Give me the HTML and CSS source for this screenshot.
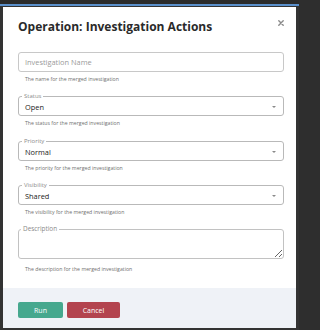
FILE: index.html
```html
<!DOCTYPE html>
<html>
<head>
<meta charset="utf-8">
<link rel="stylesheet" href="styles.css">
</head>
<body>
<div class="topbar"></div>
<div class="accent"></div>
<div class="frame">
  <div class="modal">
    <div class="header">
      <h1 class="title">Operation: Investigation Actions</h1>
      <button class="close" aria-label="Close">
        <svg width="6" height="6" viewBox="0 0 6 6"><path d="M0.8 0.8L5.2 5.2M5.2 0.8L0.8 5.2" stroke="#8a8a8a" stroke-width="1.4" stroke-linecap="round"/></svg>
      </button>
    </div>
    <div class="body">
      <div class="group first">
        <input class="input" type="text" placeholder="Investigation Name">
        <div class="help">The name for the merged investigation</div>
      </div>
      <div class="group">
        <div class="box select">
          <span class="label">Status</span>
          <span class="value">Open</span>
          <span class="caret"></span>
        </div>
        <div class="help">The status for the merged investigation</div>
      </div>
      <div class="group wide">
        <div class="box select">
          <span class="label">Priority</span>
          <span class="value">Normal</span>
          <span class="caret"></span>
        </div>
        <div class="help">The priority for the merged investigation</div>
      </div>
      <div class="group">
        <div class="box select">
          <span class="label">Visibility</span>
          <span class="value">Shared</span>
          <span class="caret"></span>
        </div>
        <div class="help">The visibility for the merged investigation</div>
      </div>
      <div class="group">
        <div class="textwrap">
          <span class="label label-lg">Description</span>
          <textarea class="textarea"></textarea>
        </div>
        <div class="help help-desc">The description for the merged investigation</div>
      </div>
    </div>
    <div class="footer">
      <button class="btn run">Run</button>
      <button class="btn cancel">Cancel</button>
    </div>
  </div>
</div>
</body>
</html>
```

FILE: styles.css
```css
* { box-sizing: border-box; }
html, body { margin: 0; padding: 0; }
html { background: #2e2e2e; }
body {
  width: 299px;
  height: 330px;
  font-family: "Open Sans", "Noto Sans", sans-serif;
  overflow: hidden;
}
.topbar { height: 4px; background: #2b2b2b; }
.accent { height: 2px; background: #5a8fcb; }
.frame { padding: 1px 3px 2px 3px; background: #333; }
.modal { background: #fff; }
.header {
  display: flex;
  justify-content: space-between;
  align-items: flex-start;
  padding: 10px 12px 0 15px;
}
.title {
  margin: 0;
  font-size: 12px;
  line-height: 20px;
  font-weight: 700;
  color: #2a2a2a;
}
.close {
  border: 0;
  background: none;
  padding: 0;
  margin: 3px 0 0 0;
  width: 6px;
  height: 6px;
  display: flex;
}
.body { padding: 0 12px 15px 15px; }
.group { margin-top: 13px; }
.group.wide { margin-top: 14px; }
.group.first { margin-top: 15px; }
.input {
  display: block;
  width: 100%;
  height: 20px;
  border: 1px solid #c8c8c8;
  border-radius: 3px;
  padding: 0 6px;
  font-family: inherit;
  font-size: 7.4px;
  color: #222;
  outline: none;
}
.input::placeholder { color: #9a9a9a; }
.help {
  margin-top: 3px;
  padding-left: 7px;
  font-size: 5.2px;
  line-height: 8px;
  color: #6f6f6f;
}
.help-desc { margin-top: 6px; }
.box {
  position: relative;
  height: 20px;
  border: 1px solid #b9b9b9;
  border-radius: 3px;
  padding: 0 6px;
  display: flex;
  align-items: center;
}
.label {
  position: absolute;
  top: -4px;
  left: 3px;
  padding: 0 2px;
  background: #fff;
  font-size: 6px;
  line-height: 7px;
  color: #8a8a8a;
}
.label-lg { font-size: 6.4px; top: -4px; }
.value {
  font-size: 7.4px;
  color: #222;
  margin-top: 2px;
}
.caret {
  position: absolute;
  right: 7px;
  top: 9px;
  width: 0;
  height: 0;
  border-left: 2px solid transparent;
  border-right: 2px solid transparent;
  border-top: 2px solid #8a8a8a;
}
.textwrap { position: relative; height: 30px; }
.textarea {
  display: block;
  width: 100%;
  height: 30px;
  border: 1px solid #c2c2c2;
  border-radius: 3px;
  resize: vertical;
  margin: 0;
  font-family: inherit;
  font-size: 7px;
  outline: none;
}
.textwrap .label { z-index: 1; }
.footer {
  background: #eff2f7;
  padding: 14px 15px 10px 15px;
  display: flex;
  gap: 4px;
}
.btn {
  height: 16px;
  border: 0;
  border-radius: 2px;
  color: #fff;
  font-family: inherit;
  font-size: 7px;
  padding: 0;
}
.run { width: 45px; background: #46a88e; }
.cancel { width: 53px; background: #b3444f; }
```
